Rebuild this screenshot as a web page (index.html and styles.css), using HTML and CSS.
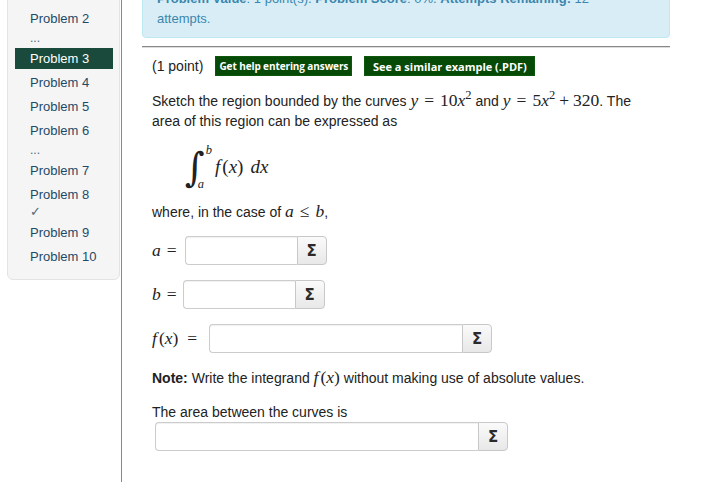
FILE: index.html
```html
<!DOCTYPE html>
<html>
<head>
<meta charset="utf-8">
<link rel="stylesheet" href="styles.css">
</head>
<body>
<div class="page">
  <aside class="sidebar">
    <div class="well">
      <ul class="problist">
        <li><a>Problem 2</a><div class="more">...</div></li>
        <li class="active"><a>Problem 3</a></li>
        <li><a>Problem 4</a></li>
        <li><a>Problem 5</a></li>
        <li><a>Problem 6</a><div class="more">...</div></li>
        <li><a>Problem 7</a></li>
        <li><a>Problem 8</a><div class="more check">&#10003;</div></li>
        <li><a>Problem 9</a></li>
        <li><a>Problem 10</a></li>
      </ul>
    </div>
  </aside>
  <main class="main">
    <div class="alert"><b>Problem Value</b>: 1 point(s). <b>Problem Score</b>: 0%. <b>Attempts Remaining:</b> 12 attempts.</div>
    <div class="rule"></div>
    <div class="problem">
      <div class="header">
        <span>(1 point)</span>
        <span class="btn btn-help">Get help entering answers</span>
        <span class="btn btn-pdf">See a similar example (.PDF)</span>
      </div>
      <p class="text intro">Sketch the region bounded by the curves <span class="m"><i>y</i><span class="rel">=</span>10<i>x</i><sup>2</sup></span> and <span class="m"><i>y</i><span class="rel">=</span>5<i>x</i><sup>2</sup><span class="bin">+</span>320</span>. The area of this region can be expressed as</p>
      <div class="display">
        <span class="intsign">&#8747;</span>
        <span class="limits"><i>b</i><i>a</i></span>
        <span class="m integrand"><i class="f">f</i>(<i>x</i>)<span class="sp"></span><i>d</i><i>x</i></span>
      </div>
      <p class="text">where, in the case of <span class="m"><i>a</i><span class="rel">&#8804;</span><i>b</i></span>,</p>
      <div class="ansrow first">
        <span class="m label"><i>a</i><span class="rel">=</span></span>
        <span class="ans"><span class="field w-a"></span><span class="sigma">&Sigma;</span></span>
      </div>
      <div class="ansrow">
        <span class="m label lb"><i>b</i><span class="rel">=</span></span>
        <span class="ans"><span class="field w-a"></span><span class="sigma">&Sigma;</span></span>
      </div>
      <div class="ansrow">
        <span class="m label fx"><i class="f">f</i>(<i>x</i>)<span class="rel">=</span></span>
        <span class="ans"><span class="field w-f"></span><span class="sigma">&Sigma;</span></span>
      </div>
      <p class="text note"><b>Note:</b> Write the integrand <span class="m"><i class="f">f</i>(<i>x</i>)</span> without making use of absolute values.</p>
      <p class="text area">The area between the curves is</p>
      <div class="ansrow tight">
        <span class="ans"><span class="field w-area"></span><span class="sigma">&Sigma;</span></span>
      </div>
    </div>
  </main>
</div>
</body>
</html>
```

FILE: styles.css
```css
* { box-sizing: border-box; }
html, body { margin: 0; padding: 0; background: #fff; }
body {
  font-family: "Liberation Sans", Arial, sans-serif;
  font-size: 14px;
  color: #222;
  overflow: hidden;
}
.page {
  display: flex;
  min-height: 482px;
}
.sidebar {
  width: 121px;
  flex: none;
  padding-left: 7px;
  padding-right: 1px;
}
.well {
  margin-top: -10px;
  background: #f5f5f5;
  border: 1px solid #e3e3e3;
  border-radius: 6px;
  padding: 17px 6px 12px 7px;
}
.problist {
  list-style: none;
  margin: 0;
  padding: 0;
}
.problist li {
  margin-bottom: 3px;
  font-size: 13px;
  color: #1f4a66;
}
.problist li:last-child { margin-bottom: 0; }
.problist a {
  display: block;
  line-height: 21px;
  padding-left: 15px;
  color: #1f4a66;
}
.problist li.active a {
  background: #1a4a3b;
  color: #fff;
}
.problist .more {
  padding-top: 2px;
  line-height: 14px;
  padding-left: 15px;
  margin-bottom: 3px;
  color: #4a6a80;
  font-size: 12px;
}
.problist .more.check {
  padding-top: 0;
  line-height: 14px;
  font-size: 13px;
}
.main {
  flex: 1;
  border-left: 1px solid #888;
  padding: 0 36px 0 20px;
}
.alert {
  margin-top: -20px;
  background: #d9edf7;
  border: 1px solid #bce8f1;
  border-radius: 4px;
  color: #3a87ad;
  padding: 8px 35px 8px 14px;
  font-size: 13px;
  line-height: 20px;
}
.rule {
  margin-top: 8px;
  border-top: 1px solid #888;
  border-bottom: 1px solid #ddd;
}
.problem {
  padding-left: 10px;
}
.header {
  margin-top: 8px;
  display: flex;
  align-items: center;
  gap: 12px;
  height: 20px;
}
.btn {
  display: inline-flex;
  align-items: center;
  justify-content: center;
  height: 20px;
  background: #074907;
  border: 1px solid #0d570d;
  color: #fff;
  font-family: "Open Sans", sans-serif;
  font-weight: 700;
}
.btn-help {
  width: 137px;
  font-size: 10px;
  letter-spacing: -0.1px;
}
.btn-pdf {
  width: 171px;
  font-size: 11px;
}
.text {
  margin: 0;
  line-height: 20px;
}
.intro {
  margin-top: 15px;
  max-width: 500px;
}
.m {
  font-family: "Liberation Serif", "Times New Roman", serif;
  font-size: 17.5px;
}
.text .m { line-height: 14px; }
.m i { font-style: italic; }
.m i.f { margin-right: 2px; }
.m sup { font-size: 12.5px; line-height: 0; vertical-align: 7px; }
.rel { margin: 0 6px; }
.bin { margin: 0 4px; }
.display {
  display: flex;
  align-items: center;
  padding-left: 33px;
  height: 71px;
}
.intsign {
  font-family: "DejaVu Serif", serif;
  font-size: 38px;
  line-height: 44px;
  font-style: italic;
  transform: scaleY(1.05);
}
.limits {
  display: flex;
  flex-direction: column;
  justify-content: space-between;
  height: 46px;
  font-family: "Liberation Serif", serif;
  font-size: 12.5px;
  line-height: 12px;
  margin-left: -4px;
}
.limits i:first-child { margin-left: 5px; }
.limits i:last-child { margin-left: -3px; }
.integrand { margin-left: 3px; font-size: 19px; }
.sp { display: inline-block; width: 7px; }
.ansrow {
  display: flex;
  align-items: center;
  margin-top: 15px;
}
.ansrow.first { margin-top: 14px; }
.label { margin-right: 8px; white-space: nowrap; }
.label .rel { margin-right: 0; }
.label.lb { margin-right: 6px; }
.label.fx { margin-right: 12px; }
.label.fx .rel { margin-left: 9px; }
.ans {
  display: inline-flex;
  height: 29px;
}
.field {
  display: block;
  height: 29px;
  border: 1px solid #ccc;
  border-right: 0;
  border-radius: 4px 0 0 4px;
  background: #fff;
  box-shadow: inset 0 1px 1px rgba(0,0,0,0.06);
}
.w-a { width: 112px; }
.w-f { width: 253px; }
.w-area { width: 323px; }
.sigma {
  display: flex;
  align-items: center;
  justify-content: center;
  width: 30px;
  height: 29px;
  border: 1px solid #c8c8c8;
  border-radius: 0 4px 4px 0;
  background: linear-gradient(#fafafa, #e8e8e8);
  font-family: "DejaVu Sans", sans-serif;
  font-weight: 700;
  font-size: 15px;
  color: #2a2a2a;
}
.note { margin-top: 15px; }
.area { margin-top: 14px; }
.ansrow.tight { margin-top: 0; padding-left: 3px; }
```
